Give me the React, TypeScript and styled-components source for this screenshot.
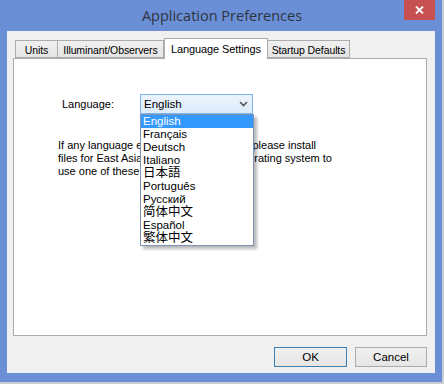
import React from 'react';
import styled, { createGlobalStyle } from 'styled-components';

const tabs = [
  { title: 'Units', width: 43 },
  { title: 'Illuminant/Observers', width: 107 },
  { title: 'Language Settings', width: 104 },
  { title: 'Startup Defaults', width: 83 },
];

const languages = [
  { name: 'English' },
  { name: 'Français' },
  { name: 'Deutsch' },
  { name: 'Italiano' },
  { name: '日本語', cjk: true },
  { name: 'Português' },
  { name: 'Русский' },
  { name: '简体中文', cjk: true },
  { name: 'Español' },
  { name: '繁体中文', cjk: true },
];

const GlobalStyle = createGlobalStyle`
  html, body {
    margin: 0;
    padding: 0;
    background: #c9cdd6;
    overflow: hidden;
  }
`;

const App: React.FC = () => {
  const [active, setActive] = React.useState(2);
  const [selected] = React.useState(0);

  return (
    <>
      <GlobalStyle />
      <Window>
        <TitleBar>
          <span />
          <Title>Application Preferences</Title>
          <CloseButton aria-label="Close">
            <svg width="9" height="8" viewBox="0 0 9 8">
              <path d="M1 0.5 L8 7.5 M8 0.5 L1 7.5" stroke="#fff" strokeWidth="1.8" />
            </svg>
          </CloseButton>
        </TitleBar>
        <Client>
          <TabRow>
            {tabs.map((tab, i) => (
              <Tab key={tab.title} $active={i === active} $width={tab.width} onClick={() => setActive(i)}>
                {tab.title}
              </Tab>
            ))}
          </TabRow>
          <Panel>
            <LanguageRow>
              <Label>Language:</Label>
              <SelectWrap>
                <SelectBox>
                  <span>{languages[selected].name}</span>
                  <svg width="9" height="6" viewBox="0 0 9 6">
                    <path d="M1 1 L4.5 4.5 L8 1" stroke="#555" strokeWidth="1.6" fill="none" />
                  </svg>
                </SelectBox>
                <DropList>
                  {languages.map((lang, i) => (
                    <Option key={lang.name} $highlight={i === selected} $cjk={!!lang.cjk}>
                      {lang.name}
                    </Option>
                  ))}
                </DropList>
              </SelectWrap>
            </LanguageRow>
            <Note>
              If any language entries appear garbled, please install
              <br />
              files for East Asian script or set your operating system to
              <br />
              use one of these languages.
            </Note>
          </Panel>
          <ButtonRow>
            <DialogButton $default>OK</DialogButton>
            <DialogButton>Cancel</DialogButton>
          </ButtonRow>
        </Client>
      </Window>
    </>
  );
};

const Window = styled.div`
  width: 442px;
  height: 382px;
  box-sizing: border-box;
  padding: 0 7px 9px 7px;
  background: #6a8fd6;
  display: flex;
  flex-direction: column;
  font-family: "Liberation Sans", Arial, sans-serif;
  font-size: 11px;
  color: #000;
`;

const TitleBar = styled.div`
  height: 31px;
  display: grid;
  grid-template-columns: 1fr auto 1fr;
  align-items: start;
`;

const Title = styled.div`
  font-family: "Open Sans", "Noto Sans", sans-serif;
  font-size: 14.5px;
  color: #2f3540;
  line-height: 31px;
  padding-left: 2px;
`;

const CloseButton = styled.button`
  justify-self: end;
  width: 31px;
  height: 20px;
  border: none;
  padding: 0;
  background: #c75050;
  display: flex;
  align-items: center;
  justify-content: center;
`;

const Client = styled.div`
  flex: 1;
  background: #f0f0f0;
  display: flex;
  flex-direction: column;
  padding: 7px 8px 6px 6px;
`;

const TabRow = styled.div`
  height: 20px;
  display: flex;
  align-items: flex-end;
  padding-left: 3px;
  position: relative;
  z-index: 1;
`;

const Tab = styled.div<{ $active?: boolean; $width: number }>`
  box-sizing: border-box;
  width: ${(p) => p.$width}px;
  height: ${(p) => (p.$active ? 21 : 18)}px;
  margin-bottom: ${(p) => (p.$active ? -1 : 0)}px;
  border: 1px solid #acacac;
  border-bottom: ${(p) => (p.$active ? 'none' : '1px solid #acacac')};
  margin-left: ${(p) => (p.$active ? 0 : -1)}px;
  background: ${(p) => (p.$active ? '#fff' : 'linear-gradient(#f0f0f0, #e5e5e5)')};
  display: flex;
  align-items: center;
  justify-content: center;
  padding-top: ${(p) => (p.$active ? 0 : 2)}px;
  font-size: ${(p) => (p.$active ? 11 : 10.5)}px;
  letter-spacing: -0.1px;
  white-space: nowrap;
  cursor: default;
`;

const Panel = styled.div`
  height: 278px;
  box-sizing: border-box;
  background: #fff;
  border: 1px solid #acacac;
  padding: 35px 0 0 44px;
`;

const LanguageRow = styled.div`
  display: flex;
  align-items: center;
  padding-left: 4px;
`;

const Label = styled.div`
  width: 78px;
`;

const SelectWrap = styled.div`
  position: relative;
`;

const SelectBox = styled.div`
  box-sizing: border-box;
  width: 113px;
  height: 20px;
  border: 1px solid #7eb4ea;
  background: linear-gradient(#ecf4fc, #dcecfc);
  display: flex;
  align-items: center;
  justify-content: space-between;
  padding: 0 4px 0 3px;
  font-size: 11.5px;
`;

const DropList = styled.div`
  position: absolute;
  top: 100%;
  left: 0;
  width: 114px;
  box-sizing: border-box;
  border: 1px solid #7f93b5;
  background: #fff;
  box-shadow: 3px 3px 3px rgba(0, 0, 0, 0.28);
  z-index: 2;
`;

const Option = styled.div<{ $highlight?: boolean; $cjk?: boolean }>`
  height: 13px;
  line-height: 13px;
  padding-left: 2px;
  font-family: "Liberation Sans", "Noto Sans CJK JP", "Noto Sans CJK SC", sans-serif;
  font-size: ${(p) => (p.$cjk ? 12.5 : 11.5)}px;
  background: ${(p) => (p.$highlight ? '#3399ff' : 'transparent')};
  color: ${(p) => (p.$highlight ? '#fff' : '#000')};
  white-space: nowrap;
`;

const Note = styled.p`
  margin: 25px 0 0 0;
  line-height: 13px;
  white-space: nowrap;
`;

const ButtonRow = styled.div`
  margin-top: 11px;
  display: flex;
  justify-content: flex-end;
  gap: 8px;
`;

const DialogButton = styled.button<{ $default?: boolean }>`
  width: ${(p) => (p.$default ? 73 : 72)}px;
  height: 20px;
  padding: 0;
  border: 1px solid ${(p) => (p.$default ? '#3c7fb1' : '#acacac')};
  background: linear-gradient(#f0f0f0, #e5e5e5);
  font-family: "Liberation Sans", Arial, sans-serif;
  font-size: 11.5px;
  color: #000;
`;

export default App;
